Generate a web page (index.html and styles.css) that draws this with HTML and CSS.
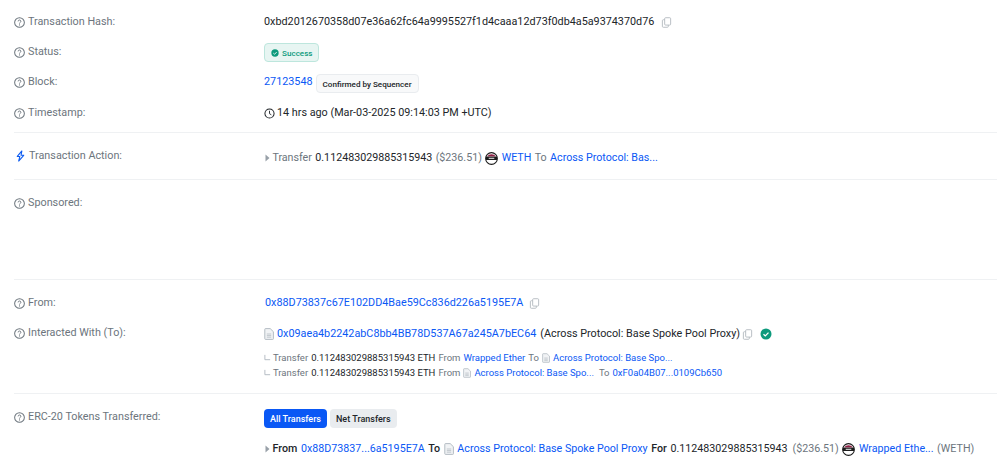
FILE: index.html
```html
<!DOCTYPE html>
<html lang="en">
<head>
<meta charset="utf-8">
<title>Transaction</title>
<link rel="stylesheet" href="styles.css">
</head>
<body>
<svg class="defs" width="0" height="0" aria-hidden="true">
  <defs>
    <symbol id="help" viewBox="0 0 12 12"><circle cx="6" cy="6" r="5.300" fill="none" stroke="currentColor" stroke-width="1.100"/><path d="M4.500 4.800a1.500 1.500 0 1 1 2.200 1.300c-.5.3-.7.5-.7 1" fill="none" stroke="currentColor" stroke-width="1"/><circle cx="6" cy="8.600" r=".6" fill="currentColor"/></symbol>
    <symbol id="copy" viewBox="0 0 12 12"><path d="M5 .8h4.500a1 1 0 0 1 1 1v6a1 1 0 0 1-1 1H5a1 1 0 0 1-1-1v-6a1 1 0 0 1 1-1z" fill="none" stroke="currentColor"/><path d="M4 3H2.500a1 1 0 0 0-1 1v6.200a1 1 0 0 0 1 1H7a1 1 0 0 0 1-1V8.800" fill="none" stroke="currentColor"/></symbol>
    <symbol id="doc" viewBox="0 0 10 12"><path d="M1.500.6h4.700L9.400 3.700v7a.7.7 0 0 1-.7.7H1.500a.7.7 0 0 1-.7-.7V1.300a.7.7 0 0 1 .7-.7z" fill="#f1f3f5" stroke="currentColor" stroke-width=".9"/><path d="M2.800 6h4.400M2.800 7.600h4.400M2.800 9.200h4.400" stroke="currentColor" stroke-width=".7"/></symbol>
    <symbol id="weth" viewBox="0 0 14 14"><circle cx="7" cy="7" r="6.300" fill="#fff" stroke="#1b1b1b" stroke-width="1.200"/><path d="M2.200 4.800a6 6 0 0 1 9.600 0z" fill="#8e1f45"/><rect x="1" y="5" width="12" height="3.600" fill="#1b1b1b"/><rect x="4" y="6.200" width="6" height="1.200" fill="#ddd"/></symbol>
    <symbol id="caret" viewBox="0 0 6 10"><path d="M.5 .5l5 4.500-5 4.500z" fill="currentColor"/></symbol>
    <symbol id="sub" viewBox="0 0 8 8"><path d="M1 1v5.500h6" fill="none" stroke="currentColor"/></symbol>
  </defs>
</svg>
<main class="card">
  <section class="row r-hash">
    <div class="label"><svg class="help"><use href="#help"/></svg>Transaction Hash:</div>
    <div class="value"><span>0xbd2012670358d07e36a62fc64a9995527f1d4caaa12d73f0db4a5a9374370d76</span><svg class="copy"><use href="#copy"/></svg></div>
  </section>
  <section class="row r-status">
    <div class="label"><svg class="help"><use href="#help"/></svg>Status:</div>
    <div class="value"><span class="badge success"><svg class="check" viewBox="0 0 12 12"><circle cx="6" cy="6" r="5.500" fill="#0c9a7c"/><path d="M3.500 6.200l1.800 1.700 3.200-3.300" fill="none" stroke="#fff" stroke-width="1.300"/></svg>Success</span></div>
  </section>
  <section class="row r-block">
    <div class="label"><svg class="help"><use href="#help"/></svg>Block:</div>
    <div class="value top"><a class="link">27123548</a><span class="badge seq">Confirmed by Sequencer</span></div>
  </section>
  <section class="row r-time">
    <div class="label"><svg class="help"><use href="#help"/></svg>Timestamp:</div>
    <div class="value"><svg class="clock" viewBox="0 0 12 12"><circle cx="6" cy="6" r="5" fill="none" stroke="#212529" stroke-width="1.100"/><path d="M6 3v3.200l2 1.200" fill="none" stroke="#212529" stroke-width="1"/></svg>14 hrs ago (Mar-03-2025 09:14:03 PM +UTC)</div>
  </section>
  <hr class="rule">
  <section class="row r-action">
    <div class="label"><svg class="bolt" viewBox="0 0 12 12"><path d="M7.500.5L2.500 6.500h2.800L4 11.500l5.500-6.300H6.600z" fill="none" stroke="#0d5bf0" stroke-width="1.200" stroke-linejoin="round"/></svg>Transaction Action:</div>
    <div class="value low"><svg class="caret"><use href="#caret"/></svg><span class="muted">Transfer</span><span>0.112483029885315943</span><span class="muted">($236.51)</span><svg class="token"><use href="#weth"/></svg><a class="link">WETH</a><span class="muted">To</span><a class="link">Across Protocol: Bas...</a></div>
  </section>
  <hr class="rule">
  <section class="row r-sponsored">
    <div class="label"><svg class="help"><use href="#help"/></svg>Sponsored:</div>
  </section>
  <hr class="rule">
  <section class="row r-from">
    <div class="label"><svg class="help"><use href="#help"/></svg>From:</div>
    <div class="value shift"><a class="link">0x88D73837c67E102DD4Bae59Cc836d226a5195E7A</a><svg class="copy"><use href="#copy"/></svg></div>
  </section>
  <section class="row r-to">
    <div class="label"><svg class="help"><use href="#help"/></svg>Interacted With (To):</div>
    <div class="value nudge"><svg class="doc"><use href="#doc"/></svg><a class="link">0x09aea4b2242abC8bb4BB78D537A67a245A7bEC64</a><span class="proxy">(Across Protocol: Base Spoke Pool Proxy)</span><svg class="copy c-proxy"><use href="#copy"/></svg><svg class="verified" viewBox="0 0 12 12"><circle cx="6" cy="6" r="5.500" fill="#0c9a7c"/><path d="M3.500 6.200l1.800 1.700 3.200-3.300" fill="none" stroke="#fff" stroke-width="1.300"/></svg></div>
  </section>
  <div class="subs">
    <div class="sub"><svg class="elbow"><use href="#sub"/></svg><span class="muted">Transfer</span><span>0.112483029885315943 ETH</span><span class="muted">From</span><a class="link">Wrapped Ether</a><span class="muted">To</span><svg class="doc small"><use href="#doc"/></svg><a class="link">Across Protocol: Base Spo...</a></div>
    <div class="sub"><svg class="elbow"><use href="#sub"/></svg><span class="muted">Transfer</span><span>0.112483029885315943 ETH</span><span class="muted">From</span><svg class="doc small"><use href="#doc"/></svg><a class="link">Across Protocol: Base Spo...</a><span class="muted spaced">To</span><a class="link">0xF0a04B07...0109Cb650</a></div>
  </div>
  <hr class="rule">
  <section class="row r-erc">
    <div class="label"><svg class="help"><use href="#help"/></svg>ERC-20 Tokens Transferred:</div>
    <div class="value tabs"><button class="tab active">All Transfers</button><button class="tab">Net Transfers</button></div>
  </section>
  <div class="transfer"><svg class="caret"><use href="#caret"/></svg><b>From</b><a class="link">0x88D73837...6a5195E7A</a><b>To</b><svg class="doc"><use href="#doc"/></svg><a class="link">Across Protocol: Base Spoke Pool Proxy</a><b>For</b><span class="amt">0.112483029885315943</span><span class="muted">($236.51)</span><svg class="token"><use href="#weth"/></svg><a class="link">Wrapped Ethe...</a><span class="muted">(WETH)</span></div>
</main>
</body>
</html>
```
FILE: styles.css
```css
* { box-sizing: border-box; }
html, body { margin: 0; padding: 0; background: #fff; }
body { width: 1000px; height: 468px; overflow: hidden; font-family: Roboto, "Liberation Sans", sans-serif; font-size: 10.8px; line-height: 16px; color: #212529; }
.defs { position: absolute; }
.card { padding: 14px 3px 0 14px; }
.row { display: flex; align-items: flex-start; white-space: nowrap; }
.label { width: 250px; flex: none; display: flex; align-items: center; gap: 3px; color: #6c757d; }
.value { display: flex; align-items: center; }
.value.top { align-items: flex-start; }
.low { padding-top: 2px; }
.nudge { padding-top: 1px; }
.shift { padding-left: 1px; }
.help { width: 11px; height: 11px; color: #6c757d; flex: none; }
.copy { width: 11px; height: 11px; color: #b4bac0; margin-left: 7px; flex: none; }
.shift .copy { margin-left: 6px; }
.c-proxy { margin-left: 2px; }
.link { color: #0a58f5; text-decoration: none; }
.muted { color: #6c757d; }
.rule { border: 0; border-top: 1px solid #eff1f3; margin: 0; }
.r-hash, .r-status, .r-block { height: 30px; }
.r-time { height: 28px; padding-top: 1px; }
.badge { display: inline-flex; align-items: center; font-size: 8.100px; border-radius: 4px; font-weight: 500; }
.success { height: 19px; padding: 0 5px 0 6px; gap: 3px; color: #0c9a7c; background: #e7f5f2; border: 1px solid #bde6dd; margin-top: -1px; }
.check { width: 8px; height: 8px; }
.seq { height: 19px; padding: 0 6px; margin-left: 3px; color: #212529; background: #f8f9fa; border: 1px solid #e9ecef; }
.clock { width: 11px; height: 11px; margin-right: 2px; }
.r-action { height: 46px; padding-top: 15px; }
.r-action .label { gap: 3px; padding-left: 1px; }
.bolt { width: 11px; height: 12px; flex: none; }
.r-action .value { gap: 3.400px; font-size: 10.700px; }
.caret { width: 5px; height: 8px; color: #98a0a8; margin: 0 -1px 0 1px; flex: none; }
.token { width: 13px; height: 13px; flex: none; }
.r-sponsored { height: 99px; padding-top: 15px; }
.r-from { height: 30px; padding-top: 15px; }
.r-to { height: 16px; margin-top: 15px; }
.doc { width: 10px; height: 12px; color: #adb5bd; margin-right: 3px; flex: none; }
.doc.small { width: 8px; height: 10px; margin-right: 0; }
.proxy { margin-left: 4px; }
.verified { width: 12px; height: 12px; margin-left: 7px; flex: none; }
.subs { padding: 9px 0 0 250px; height: 52px; font-size: 9.500px; }
.sub { display: flex; align-items: center; gap: 3px; height: 15px; line-height: 15px; white-space: nowrap; }
.elbow { width: 7px; height: 7px; color: #adb5bd; margin-right: -1px; flex: none; }
.spaced { margin-left: 2px; }
.r-erc { padding-top: 15px; height: 47px; }
.tabs { gap: 3px; align-self: flex-start; }
.tab { height: 19px; border: 0; border-radius: 4px; padding: 0 6px; font: 500 9px Roboto, sans-serif; background: #e9ecef; color: #212529; }
.tab.active { background: #0a58f5; color: #fff; }
.transfer { display: flex; align-items: center; gap: 3.600px; margin-left: 250px; height: 16px; white-space: nowrap; font-size: 10.700px; }
.transfer b { font-weight: 500; }
.transfer .doc { margin-right: 0; }
.amt { margin-right: 1.500px; }
```
